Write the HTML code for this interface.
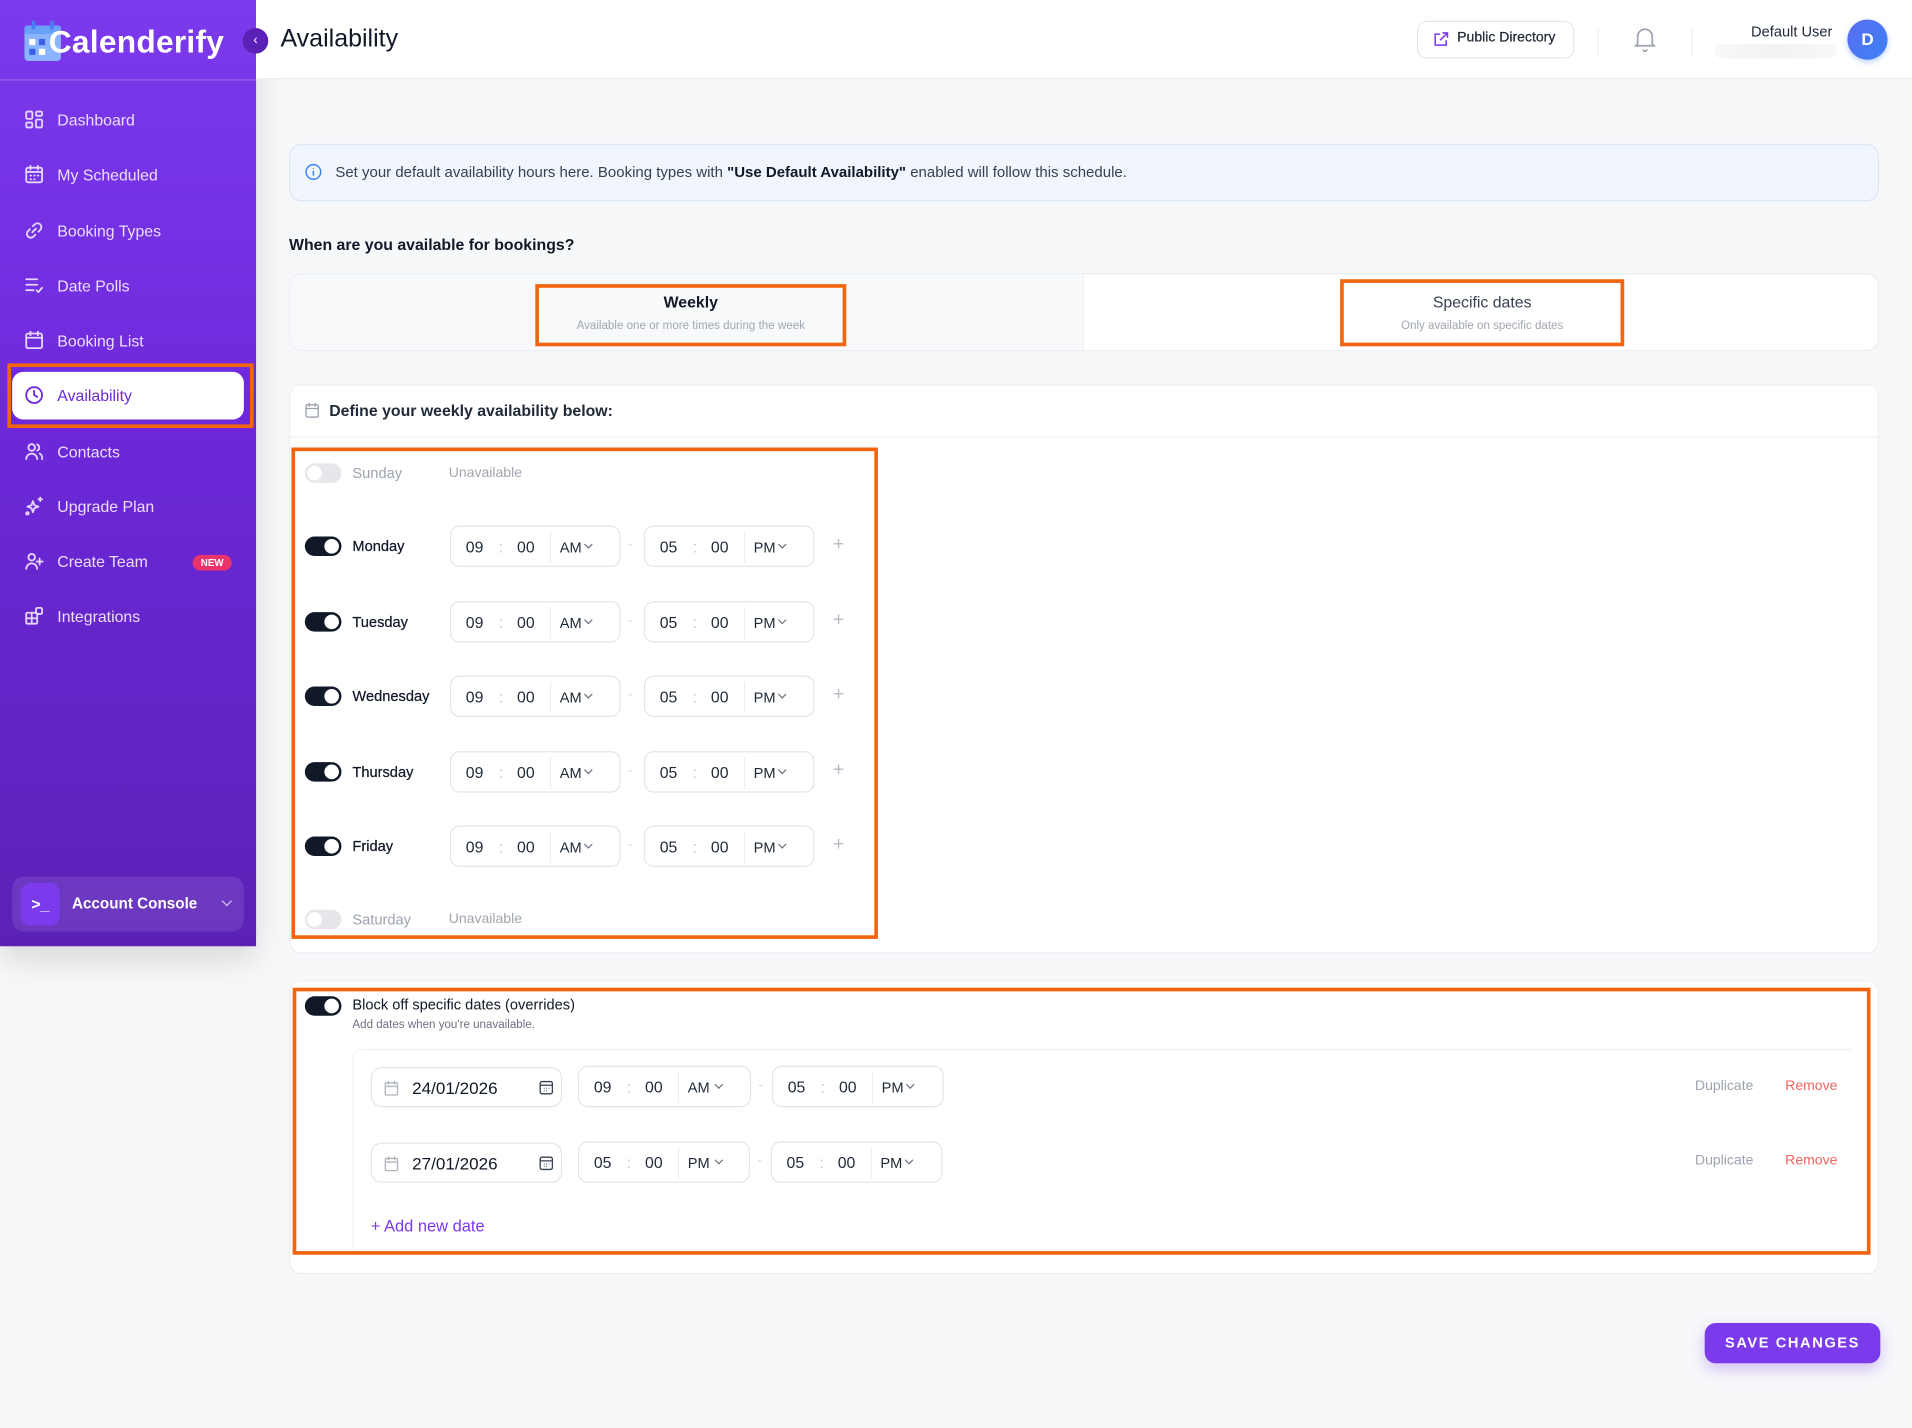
<!DOCTYPE html>
<html><head><meta charset="utf-8">
<style>
*{box-sizing:border-box;margin:0;padding:0}
html,body{width:1912px;height:1428px;overflow:hidden;background:#f7f8fa;font-family:"Liberation Sans",Arial,sans-serif}
#w{position:absolute;left:0;top:0;width:1568px;height:1171px;transform:scale(1.21939);transform-origin:0 0;background:#f7f8fa}
.a{position:absolute}
.sb{left:0;top:0;width:210px;height:776px;background:linear-gradient(180deg,#7c3aed 0%,#6d28d9 45%,#5b21b6 100%);box-shadow:0 12px 24px rgba(0,0,0,.12)}
.nav{left:20px;color:#ecdfff;font-size:13px;display:flex;align-items:center;gap:11px;height:20px}
.nav svg{width:16px;height:16px;fill:none;stroke:#e4d6ff;stroke-width:1.5;stroke-linecap:round;stroke-linejoin:round}
.hdr{left:210px;top:0;width:1358px;height:65px;background:#fff;border-bottom:1px solid #eceef2}
.card{background:#fff;border:1px solid #eceef2;border-radius:10px}
.or{border:3px solid #f2650f}
.tg{width:30px;height:16px;border-radius:8px;background:#111827}
.tg::after{content:"";position:absolute;right:2px;top:2px;width:12px;height:12px;border-radius:50%;background:#fff}
.tg.off{background:#e5e7eb}
.tg.off::after{left:2px;right:auto}
.day{left:289px;font-size:12px;color:#111827;-webkit-text-stroke:0.2px #111827}
.day.off{color:#9ca3af;-webkit-text-stroke:0}
.tb{width:140px;height:34px;border:1px solid #e2e5ea;border-radius:8px;background:#fff;font-size:13px;color:#1f2937}
.tb span{position:absolute;top:9px}
.tb .c{color:#c0c4cc}
.tb .sep{position:absolute;left:81px;top:4px;width:1px;height:26px;background:#eceef1}
.tb .ap{font-size:12px;top:10px}
.tb .ch{position:absolute;top:12px;width:5px;height:5px;border-right:1px solid #6b7280;border-bottom:1px solid #6b7280;transform:rotate(45deg)}
.dash{color:#d1d5db;font-size:11px}
.plus{color:#b8bcc4;font-size:16px}
</style></head><body><div id="w">

<!-- sidebar -->
<div class="a sb">
  <div class="a" style="left:0;top:65px;width:210px;height:1px;background:rgba(255,255,255,.22)"></div>
  <svg class="a" style="left:20px;top:16px" width="30" height="34" viewBox="0 0 30 34">
    <rect x="0" y="5" width="30" height="29" rx="3" fill="#8ab4ff"/>
    <rect x="0" y="5" width="30" height="7" rx="2" fill="#6aa0f8"/>
    <rect x="6" y="1" width="3" height="7" fill="#4b7bf0"/><rect x="21" y="1" width="3" height="7" fill="#4b7bf0"/>
    <rect x="4" y="16" width="5" height="5" fill="#fff"/><rect x="12" y="16" width="5" height="5" fill="#3b5de7"/>
    <rect x="4" y="24" width="5" height="5" fill="#3b5de7"/><rect x="12" y="24" width="5" height="5" fill="#fff"/>
  </svg>
  <div class="a" style="left:40px;top:19px;color:#fff;font-size:26px;font-weight:bold;letter-spacing:0.2px">Calenderify</div>

  <div class="a nav" style="top:88px"><svg viewBox="0 0 16 16"><rect x="1.5" y="1.5" width="5" height="6" rx="1"/><rect x="9.5" y="1.5" width="5" height="3.5" rx="1"/><rect x="1.5" y="10.5" width="5" height="4" rx="1"/><rect x="9.5" y="8" width="5" height="6.5" rx="1"/></svg>Dashboard</div>
  <div class="a nav" style="top:133px"><svg viewBox="0 0 16 16"><rect x="1.5" y="2.5" width="13" height="12" rx="1.5"/><path d="M5 1v3M11 1v3M1.5 6h13M5 9h.5M8 9h.5M11 9h.5M5 12h.5M8 12h.5"/></svg>My Scheduled</div>
  <div class="a nav" style="top:179px"><svg viewBox="0 0 16 16"><path d="M6.5 9.5l3-3M7 4.5l1.5-1.5a3 3 0 014.5 4.5L11.5 9M9 11.5L7.5 13a3 3 0 01-4.5-4.5L4.5 7"/></svg>Booking Types</div>
  <div class="a nav" style="top:224px"><svg viewBox="0 0 16 16"><path d="M1.5 3h9M1.5 7.5h9M1.5 12h6M10 12l1.5 1.5L14.5 10"/></svg>Date Polls</div>
  <div class="a nav" style="top:269px"><svg viewBox="0 0 16 16"><rect x="1.5" y="2.5" width="13" height="12" rx="1.5"/><path d="M5 1v3M11 1v3M1.5 6h13"/></svg>Booking List</div>
  <div class="a or" style="left:6px;top:298px;width:202px;height:53px"></div>
  <div class="a" style="left:10px;top:305px;width:190px;height:39px;background:#fff;border-radius:9px"></div>
  <div class="a nav" style="top:314px;color:#6d28d9"><svg viewBox="0 0 16 16" style="stroke:#6d28d9"><circle cx="8" cy="8" r="6.5"/><path d="M8 4.5V8l2.5 1.5"/></svg>Availability</div>
  <div class="a nav" style="top:360px"><svg viewBox="0 0 16 16"><circle cx="6" cy="5" r="2.7"/><path d="M1.5 14.5a4.5 4.5 0 019 0M10.5 2.5a2.7 2.7 0 010 5M12.5 10a4 4 0 012 4.5"/></svg>Contacts</div>
  <div class="a nav" style="top:405px"><svg viewBox="0 0 16 16"><path d="M7 4l1.2 3.3L11.5 8.5 8.2 9.7 7 13 5.8 9.7 2.5 8.5l3.3-1.2zM13 1v3M11.5 2.5h3"/><circle cx="2.5" cy="14" r="1"/></svg>Upgrade Plan</div>
  <div class="a nav" style="top:450px"><svg viewBox="0 0 16 16"><circle cx="6" cy="5" r="2.7"/><path d="M1.5 14.5a4.5 4.5 0 019 0M12.5 6v5M10 8.5h5"/></svg>Create Team</div>
  <div class="a" style="left:158px;top:455px;width:32px;height:13px;border-radius:7px;background:#e8336d;color:#fff;font-size:8px;font-weight:bold;text-align:center;line-height:13px">NEW</div>
  <div class="a nav" style="top:495px"><svg viewBox="0 0 16 16"><rect x="1.5" y="5.5" width="9" height="9" rx="1"/><path d="M1.5 10h9M6 5.5v9"/><rect x="9.5" y="1.5" width="5" height="5" rx="1"/></svg>Integrations</div>

  <div class="a" style="left:10px;top:719px;width:190px;height:45px;background:rgba(255,255,255,.1);border-radius:10px"></div>
  <div class="a" style="left:17px;top:724px;width:32px;height:35px;background:#7c3aed;border-radius:8px;color:#fff;font-size:13px;font-weight:bold;text-align:center;line-height:35px">&gt;_</div>
  <div class="a" style="left:59px;top:734px;color:#fff;font-size:12.5px;font-weight:bold">Account Console</div>
  <div class="a" style="left:183px;top:736px;width:6px;height:6px;border-right:1px solid #d8c8ff;border-bottom:1px solid #d8c8ff;transform:rotate(45deg)"></div>
</div>

<!-- header -->
<div class="a hdr"></div>
<div class="a" style="left:199px;top:23px;width:21px;height:21px;border-radius:50%;background:#5b21b6;color:#fff;font-size:11px;text-align:center;line-height:20px">&#8249;</div>
<div class="a" style="left:230px;top:20px;font-size:20.5px;color:#111827">Availability</div>
<div class="a" style="left:1162px;top:17px;width:129px;height:31px;border:1px solid #e5e7eb;border-radius:8px;background:#fff"></div>
<svg class="a" style="left:1175px;top:26px" width="13" height="13" viewBox="0 0 13 13" fill="none" stroke="#7c3aed" stroke-width="1.3"><path d="M6 2H2v9h9V7M8 1h4v4M12 1L6 7"/></svg>
<div class="a" style="left:1195px;top:25px;font-size:11.5px;color:#1f2937;-webkit-text-stroke:0.2px #1f2937">Public Directory</div>
<div class="a" style="left:1310px;top:24px;width:1px;height:22px;background:#eceef1"></div>
<svg class="a" style="left:1339px;top:21px" width="20" height="22" viewBox="0 0 20 22" fill="none" stroke="#9ca3af" stroke-width="1.4"><path d="M4 15V9a6 6 0 0112 0v6l1.5 1.5h-15zM8.5 19.5a1.5 1.5 0 003 0"/></svg>
<div class="a" style="left:1387px;top:24px;width:1px;height:22px;background:#eceef1"></div>
<div class="a" style="left:1406px;top:36px;width:100px;height:12px;background:linear-gradient(90deg,#f8f8f9,#f1f2f4,#f8f8f9);border-radius:6px"></div>
<div class="a" style="left:1436px;top:19px;font-size:12px;color:#1f2937">Default User</div>
<div class="a" style="left:1515px;top:16px;width:33px;height:33px;border-radius:50%;background:linear-gradient(135deg,#5b6cf0,#3b82f6);color:#fff;font-weight:bold;font-size:14px;text-align:center;line-height:33px;box-shadow:0 2px 5px rgba(59,130,246,.35)">D</div>

<!-- info -->
<div class="a" style="left:237px;top:118px;width:1304px;height:47px;background:#f1f6fe;border:1px solid #dce7f6;border-radius:10px"></div>
<svg class="a" style="left:250px;top:134px" width="14" height="14" viewBox="0 0 14 14" fill="none" stroke="#3b82f6" stroke-width="1.2"><circle cx="7" cy="7" r="6"/><path d="M7 6v4M7 4v.5"/></svg>
<div class="a" style="left:275px;top:134px;font-size:12.3px;color:#374151">Set your default availability hours here. Booking types with <b style="color:#111827">"Use Default Availability"</b> enabled will follow this schedule.</div>

<div class="a" style="left:237px;top:193px;font-size:13px;color:#111827;font-weight:bold">When are you available for bookings?</div>
<div class="a card" style="left:237px;top:224px;width:1304px;height:64px"></div>
<div class="a" style="left:238px;top:225px;width:651px;height:62px;background:#f8f9fb;border-radius:10px 0 0 10px;border-right:1px solid #eceef2"></div>
<div class="a or" style="left:439px;top:233px;width:255px;height:51px;background:#f8f9fb"></div>
<div class="a" style="left:439px;top:240px;width:255px;text-align:center;font-size:13px;font-weight:bold;color:#111827">Weekly</div>
<div class="a" style="left:439px;top:262px;width:255px;text-align:center;font-size:9.5px;color:#a0a6b0">Available one or more times during the week</div>
<div class="a or" style="left:1099px;top:229px;width:233px;height:55px"></div>
<div class="a" style="left:1099px;top:240px;width:233px;text-align:center;font-size:13px;color:#374151">Specific dates</div>
<div class="a" style="left:1099px;top:262px;width:233px;text-align:center;font-size:9.5px;color:#a0a6b0">Only available on specific dates</div>

<!-- weekly card -->
<div class="a card" style="left:237px;top:315px;width:1304px;height:467px"></div>
<div class="a" style="left:238px;top:358px;width:1302px;height:1px;background:#eef0f3"></div>
<svg class="a" style="left:250px;top:330px" width="12" height="13" viewBox="0 0 12 13" fill="none" stroke="#9ca3af" stroke-width="1.1"><rect x="1" y="2" width="10" height="10" rx="1"/><path d="M3.5 0.5v3M8.5 0.5v3M1 5h10"/></svg>
<div class="a" style="left:270px;top:329px;font-size:13px;font-weight:bold;color:#1f2937">Define your weekly availability below:</div>
<div class="a or" style="left:239px;top:367px;width:481px;height:403px"></div>

<div class="a tg off" style="left:250px;top:380px"></div>
<div class="a day off" style="top:381px">Sunday</div>
<div class="a" style="left:368px;top:382px;font-size:11.5px;color:#a0a6b0">Unavailable</div>

<div class="a tg" style="left:250px;top:440px"></div><div class="a day" style="top:441px">Monday</div>
<div class="a tb" style="left:369px;top:431px"><span style="left:12px">09</span><span class="c" style="left:39px">:</span><span style="left:54px">00</span><i class="sep"></i><span class="ap" style="left:89px">AM</span><i class="ch" style="left:110px"></i></div>
<div class="a dash" style="left:515px;top:441px">-</div>
<div class="a tb" style="left:528px;top:431px"><span style="left:12px">05</span><span class="c" style="left:39px">:</span><span style="left:54px">00</span><i class="sep"></i><span class="ap" style="left:89px">PM</span><i class="ch" style="left:110px"></i></div>
<div class="a plus" style="left:683px;top:438px">+</div>

<div class="a tg" style="left:250px;top:502px"></div><div class="a day" style="top:503px">Tuesday</div>
<div class="a tb" style="left:369px;top:493px"><span style="left:12px">09</span><span class="c" style="left:39px">:</span><span style="left:54px">00</span><i class="sep"></i><span class="ap" style="left:89px">AM</span><i class="ch" style="left:110px"></i></div>
<div class="a dash" style="left:515px;top:503px">-</div>
<div class="a tb" style="left:528px;top:493px"><span style="left:12px">05</span><span class="c" style="left:39px">:</span><span style="left:54px">00</span><i class="sep"></i><span class="ap" style="left:89px">PM</span><i class="ch" style="left:110px"></i></div>
<div class="a plus" style="left:683px;top:500px">+</div>

<div class="a tg" style="left:250px;top:563px"></div><div class="a day" style="top:564px">Wednesday</div>
<div class="a tb" style="left:369px;top:554px"><span style="left:12px">09</span><span class="c" style="left:39px">:</span><span style="left:54px">00</span><i class="sep"></i><span class="ap" style="left:89px">AM</span><i class="ch" style="left:110px"></i></div>
<div class="a dash" style="left:515px;top:564px">-</div>
<div class="a tb" style="left:528px;top:554px"><span style="left:12px">05</span><span class="c" style="left:39px">:</span><span style="left:54px">00</span><i class="sep"></i><span class="ap" style="left:89px">PM</span><i class="ch" style="left:110px"></i></div>
<div class="a plus" style="left:683px;top:561px">+</div>

<div class="a tg" style="left:250px;top:625px"></div><div class="a day" style="top:626px">Thursday</div>
<div class="a tb" style="left:369px;top:616px"><span style="left:12px">09</span><span class="c" style="left:39px">:</span><span style="left:54px">00</span><i class="sep"></i><span class="ap" style="left:89px">AM</span><i class="ch" style="left:110px"></i></div>
<div class="a dash" style="left:515px;top:626px">-</div>
<div class="a tb" style="left:528px;top:616px"><span style="left:12px">05</span><span class="c" style="left:39px">:</span><span style="left:54px">00</span><i class="sep"></i><span class="ap" style="left:89px">PM</span><i class="ch" style="left:110px"></i></div>
<div class="a plus" style="left:683px;top:623px">+</div>

<div class="a tg" style="left:250px;top:686px"></div><div class="a day" style="top:687px">Friday</div>
<div class="a tb" style="left:369px;top:677px"><span style="left:12px">09</span><span class="c" style="left:39px">:</span><span style="left:54px">00</span><i class="sep"></i><span class="ap" style="left:89px">AM</span><i class="ch" style="left:110px"></i></div>
<div class="a dash" style="left:515px;top:687px">-</div>
<div class="a tb" style="left:528px;top:677px"><span style="left:12px">05</span><span class="c" style="left:39px">:</span><span style="left:54px">00</span><i class="sep"></i><span class="ap" style="left:89px">PM</span><i class="ch" style="left:110px"></i></div>
<div class="a plus" style="left:683px;top:684px">+</div>

<div class="a tg off" style="left:250px;top:746px"></div>
<div class="a day off" style="top:747px">Saturday</div>
<div class="a" style="left:368px;top:748px;font-size:11.5px;color:#a0a6b0">Unavailable</div>

<!-- overrides -->
<div class="a card" style="left:237px;top:804px;width:1304px;height:241px"></div>
<div class="a or" style="left:240px;top:810px;width:1294px;height:219px"></div>
<div class="a tg" style="left:250px;top:817px"></div>
<div class="a" style="left:289px;top:817px;font-size:12px;color:#111827">Block off specific dates (overrides)</div>
<div class="a" style="left:289px;top:835px;font-size:9.5px;color:#6b7280">Add dates when you're unavailable.</div>
<div class="a" style="left:289px;top:860px;width:1231px;height:165px;border-top:1px solid #f0f1f4;border-left:1px solid #f0f1f4;border-radius:8px 0 0 0"></div>

<div class="a tb" style="left:304px;top:875px;width:157px;height:33px;border-radius:9px"><svg style="position:absolute;left:10px;top:10px" width="12" height="13" viewBox="0 0 12 13" fill="none" stroke="#b0b5bd" stroke-width="1.1"><rect x="1" y="2" width="10" height="10" rx="1"/><path d="M3.5 0.5v3M8.5 0.5v3M1 5h10"/></svg><span style="left:33px;top:8px;font-size:14px;color:#111827">24/01/2026</span><svg style="position:absolute;left:137px;top:10px" width="12" height="12" viewBox="0 0 12 12" fill="none" stroke="#374151" stroke-width="1.1"><rect x="1" y="1" width="10" height="10" rx="1.5"/><path d="M1 4h10M4 6.5h.5M6 6.5h.5M8 6.5h.5M4 8.5h.5M6 8.5h.5"/></svg></div>
<div class="a tb" style="left:474px;top:874px;width:142px"><span style="left:12px">09</span><span class="c" style="left:39px">:</span><span style="left:54px">00</span><i class="sep"></i><span class="ap" style="left:89px">AM</span><i class="ch" style="left:112px"></i></div>
<div class="a dash" style="left:622px;top:884px">-</div>
<div class="a tb" style="left:633px;top:874px;width:141px"><span style="left:12px">05</span><span class="c" style="left:39px">:</span><span style="left:54px">00</span><i class="sep"></i><span class="ap" style="left:89px">PM</span><i class="ch" style="left:110px"></i></div>
<div class="a" style="left:1390px;top:885px;font-size:11.5px;color:#9ca3af">Duplicate</div>
<div class="a" style="left:1464px;top:885px;font-size:11.5px;color:#ef6461">Remove</div>

<div class="a tb" style="left:304px;top:937px;width:157px;height:33px;border-radius:9px"><svg style="position:absolute;left:10px;top:10px" width="12" height="13" viewBox="0 0 12 13" fill="none" stroke="#b0b5bd" stroke-width="1.1"><rect x="1" y="2" width="10" height="10" rx="1"/><path d="M3.5 0.5v3M8.5 0.5v3M1 5h10"/></svg><span style="left:33px;top:8px;font-size:14px;color:#111827">27/01/2026</span><svg style="position:absolute;left:137px;top:10px" width="12" height="12" viewBox="0 0 12 12" fill="none" stroke="#374151" stroke-width="1.1"><rect x="1" y="1" width="10" height="10" rx="1.5"/><path d="M1 4h10M4 6.5h.5M6 6.5h.5M8 6.5h.5M4 8.5h.5M6 8.5h.5"/></svg></div>
<div class="a tb" style="left:474px;top:936px;width:141px"><span style="left:12px">05</span><span class="c" style="left:39px">:</span><span style="left:54px">00</span><i class="sep"></i><span class="ap" style="left:89px">PM</span><i class="ch" style="left:112px"></i></div>
<div class="a dash" style="left:621px;top:946px">-</div>
<div class="a tb" style="left:632px;top:936px;width:141px"><span style="left:12px">05</span><span class="c" style="left:39px">:</span><span style="left:54px">00</span><i class="sep"></i><span class="ap" style="left:89px">PM</span><i class="ch" style="left:110px"></i></div>
<div class="a" style="left:1390px;top:946px;font-size:11.5px;color:#9ca3af">Duplicate</div>
<div class="a" style="left:1464px;top:946px;font-size:11.5px;color:#ef6461">Remove</div>

<div class="a" style="left:304px;top:998px;font-size:13.5px;color:#7c3aed">+ Add new date</div>

<div class="a" style="left:1398px;top:1085px;width:144px;height:33px;border-radius:9px;background:#7c3aed;color:#fff;font-size:12px;font-weight:bold;letter-spacing:1.3px;text-align:center;line-height:33px;box-shadow:0 5px 12px rgba(124,58,237,.3)">SAVE CHANGES</div>

</div></body></html>
